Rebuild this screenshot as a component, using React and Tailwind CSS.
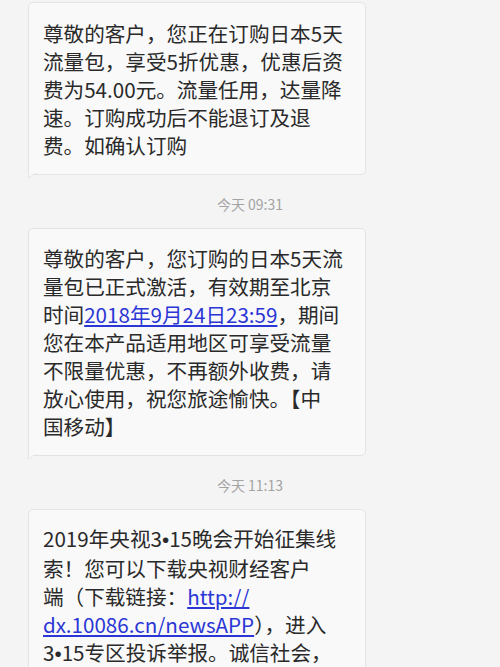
import React from "react";

const Dot = () => <span className="font-['Liberation_Sans',sans-serif]">•</span>;

const messages = [
  {
    lines: [
      "尊敬的客户，您正在订购日本5天",
      "流量包，享受5折优惠，优惠后资",
      "费为54.00元。流量任用，达量降",
      "速。订购成功后不能退订及退",
      "费。如确认订购",
    ],
    time: "今天 09:31",
    pad: "pt-[16px] pb-[15px]",
  },
  {
    lines: [
      "尊敬的客户，您订购的日本5天流",
      "量包已正式激活，有效期至北京",
      <>
        时间<a className="text-[#2b36d6] underline underline-offset-2">2018年9月24日23:59</a>，期间
      </>,
      "您在本产品适用地区可享受流量",
      "不限量优惠，不再额外收费，请",
      "放心使用，祝您旅途愉快。【中",
      "国移动】",
    ],
    time: "今天 11:13",
    pad: "pt-[15px] pb-[15px]",
  },
  {
    lines: [
      <>
        2019年央视3<Dot />15晚会开始征集线
      </>,
      "索！您可以下载央视财经客户",
      <>
        端（下载链接：<a className="text-[#2b36d6] underline underline-offset-2">http://</a>
      </>,
      <>
        <a className="text-[#2b36d6] underline underline-offset-2">dx.10086.cn/newsAPP</a>），进入
      </>,
      <>
        3<Dot />15专区投诉举报。诚信社会，
      </>,
    ],
    pad: "pt-[14px] pb-[40px]",
  },
];

function Bubble({ lines, pad }) {
  return (
    <div
      className={`relative ml-[28px] w-[338px] rounded-[5px] rounded-bl-none border border-[#e4e4e4] bg-[#f9f9f9] px-[14px] ${pad} text-[20.6px] leading-[28px] text-[#2a2a2a]`}
    >
      {lines.map((l, i) => (
        <div key={i} className="whitespace-nowrap">
          {l}
        </div>
      ))}
      {/* little tail at bottom-left */}
      <svg
        className="absolute left-[-1px] top-full mt-[-1px]"
        width="10"
        height="6"
        viewBox="0 0 10 6"
      >
        <path d="M0 0 L0 5 Q3 2 9 0 Z" fill="#f9f9f9" />
        <path d="M0.5 0 V4.6 Q0.8 5.2 1.4 4.6 Q4 1.6 9 0.5" fill="none" stroke="#e4e4e4" strokeWidth="1" />
      </svg>
    </div>
  );
}

export default function App() {
  return (
    <div className="h-screen overflow-hidden bg-[#f4f4f4] pt-[2px] font-['Noto_Sans_CJK_SC','Noto_Sans',sans-serif]">
      {messages.map((m, i) => (
        <div key={i}>
          <Bubble lines={m.lines} pad={m.pad} />
          {m.time && (
            <div className="h-[53px] pt-[20px] text-center text-[14px] leading-[18px] text-[#a3a3a3]">
              {m.time}
            </div>
          )}
        </div>
      ))}
    </div>
  );
}
